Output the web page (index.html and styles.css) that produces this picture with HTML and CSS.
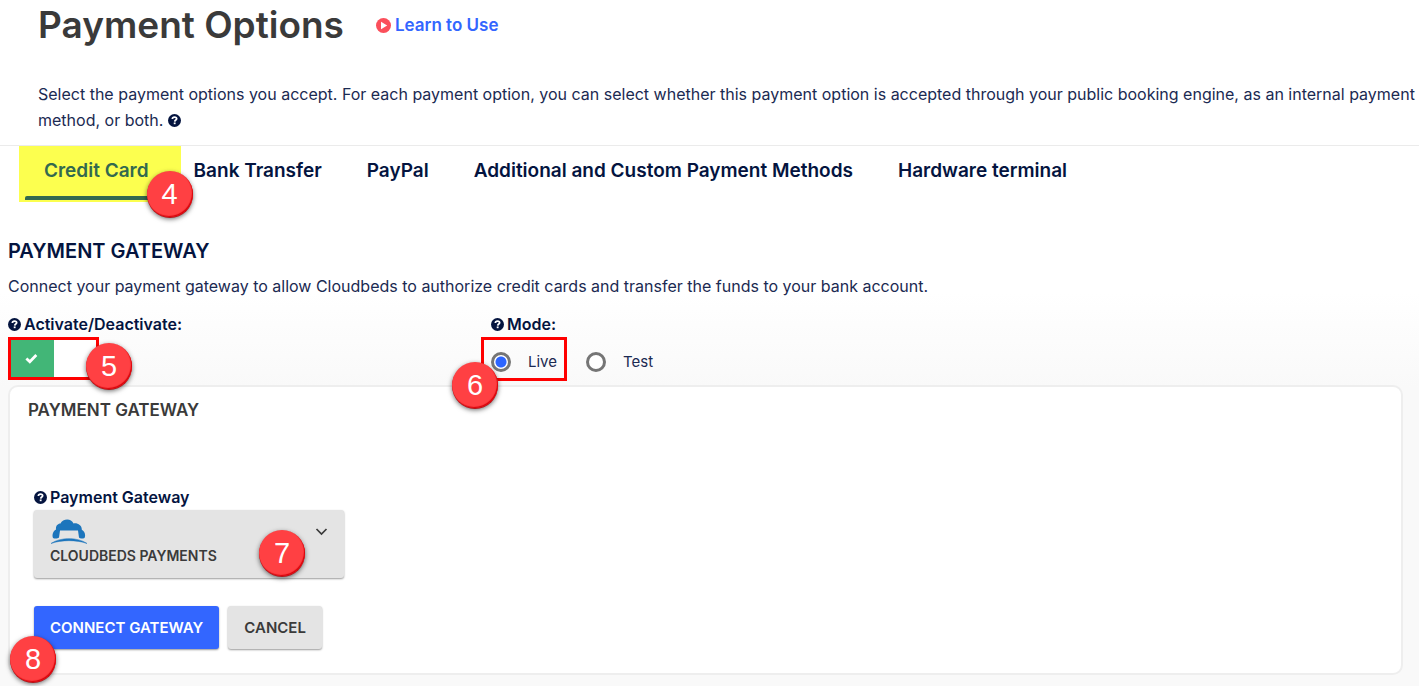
FILE: index.html
```html
<!DOCTYPE html>
<html lang="en">
<head>
<meta charset="utf-8">
<meta name="viewport" content="width=device-width, initial-scale=1">
<title>Payment Options</title>
<link rel="stylesheet" href="styles.css">
</head>
<body>
<svg class="sprite" aria-hidden="true">
  <symbol id="help" viewBox="0 0 12 12">
    <circle cx="6" cy="6" r="6" fill="currentColor"/>
    <path d="M4 4.6C4.1 3.3 5 2.8 6 2.8s2 .6 2 1.6C8 5.600 6.300 5.600 6.200 7" fill="none" stroke="#fff" stroke-width="1.600"/>
    <rect x="5.300" y="7.800" width="1.700" height="1.600" fill="#fff"/>
  </symbol>
</svg>
<header class="page-header">
  <div class="title-row">
    <h1 class="title">Payment Options</h1>
    <a class="learn" href="#learn">
      <svg class="learn-icon" viewBox="0 0 15 15" aria-hidden="true"><circle cx="7.500" cy="7.500" r="7.500" fill="#fb4f5b"/><path d="M5 3.800v7.400l6.200-3.700z" fill="#fff"/></svg>
      Learn to Use
    </a>
  </div>
  <p class="intro">Select the payment options you accept. For each payment option, you can select whether this payment option is accepted through your public booking engine, as an internal payment method, or both. <svg class="help" aria-hidden="true"><use href="#help"/></svg></p>
</header>
<nav class="tabs">
  <a class="tab tab-active" href="#card">Credit Card<span class="badge badge-tab">4</span></a>
  <a class="tab" href="#bank">Bank Transfer</a>
  <a class="tab" href="#paypal">PayPal</a>
  <a class="tab" href="#custom">Additional and Custom Payment Methods</a>
  <a class="tab" href="#hardware">Hardware terminal</a>
</nav>
<main class="content">
  <h2 class="section-title">PAYMENT GATEWAY</h2>
  <p class="section-text">Connect your payment gateway to allow Cloudbeds to authorize credit cards and transfer the funds to your bank account.</p>
  <div class="settings">
    <div class="setting">
      <label class="label" for="active"><svg class="help" aria-hidden="true"><use href="#help"/></svg>Activate/Deactivate:</label>
      <div class="callout callout-toggle">
        <span class="toggle">
          <input class="toggle-input" id="active" type="checkbox" checked>
          <svg class="check" viewBox="0 0 14 11" aria-hidden="true"><path d="M1.500 5.500l3.700 3.500 7-7.200" fill="none" stroke="#fff" stroke-width="3"/></svg>
        </span>
        <span class="badge badge-toggle">5</span>
      </div>
    </div>
    <fieldset class="setting">
      <legend class="label label-mode"><svg class="help" aria-hidden="true"><use href="#help"/></svg>Mode:</legend>
      <div class="mode-row">
        <div class="callout callout-live">
          <label class="mode"><input class="radio" type="radio" name="mode" checked>Live</label>
          <span class="badge badge-live">6</span>
        </div>
        <label class="mode"><input class="radio" type="radio" name="mode">Test</label>
      </div>
    </fieldset>
  </div>
  <section class="card">
    <h3 class="card-title">PAYMENT GATEWAY</h3>
    <div class="form">
      <label class="label" for="gateway"><svg class="help" aria-hidden="true"><use href="#help"/></svg>Payment Gateway</label>
      <div class="gateway">
        <select class="gateway-select" id="gateway"><option>CLOUDBEDS PAYMENTS</option></select>
        <svg class="logo" viewBox="0 0 36 25" aria-hidden="true">
          <path d="M5 10.500C4.500 6 7.500 4.600 9.500 4.500C11.500-.2 20-1.500 22.500 4.500c3.500-1 8.500 1.500 8.300 6.300C33.500 12 35 16 33.500 19c-2.200 1-4.500.6-5.500-.5L27 11.500H9L8 18.500C6.500 20 3.500 19.800 2 19 .7 16 2 12 5 10.500z" fill="#1c75bc"/>
          <path d="M0 24.500C9 18 27 18 36 24.500 26 20.700 10 20.700 0 24.500z" fill="#1c75bc" stroke="#1c75bc" stroke-width=".5"/>
        </svg>
        <svg class="chevron" viewBox="0 0 12 8" aria-hidden="true"><path d="M1 1l5 5 5-5" fill="none" stroke="#3a3a3a" stroke-width="1.700"/></svg>
        <span class="badge badge-gateway">7</span>
      </div>
      <div class="actions">
        <button class="button primary" type="button">CONNECT GATEWAY<span class="badge badge-connect">8</span></button>
        <button class="button" type="button">CANCEL</button>
      </div>
    </div>
  </section>
</main>
</body>
</html>
```
FILE: styles.css
```css
* { box-sizing: border-box; }
body {
  margin: 0;
  background: #fff;
  color: #04143f;
  font: 16px/26px Inter, "Open Sans", sans-serif;
}
h1, h2, h3, p { margin: 0; }
a { text-decoration: none; }
.sprite { position: absolute; width: 0; height: 0; }
.help { width: 13px; height: 13px; flex: none; vertical-align: -1px; color: #04143f; }

.page-header { padding: 0 0 12px 38px; border-bottom: 1px solid #ebebeb; }
.title-row { display: flex; align-items: center; gap: 32px; height: 50px; margin-bottom: 31px; }
.title { color: #3a3a3a; font-size: 37px; font-weight: 600; line-height: 48px; }
.learn { display: flex; align-items: center; gap: 4px; color: #3366ff; font-size: 17px; font-weight: 600; }
.learn-icon { width: 15px; height: 15px; }
.intro { color: #1b2a52; }

.tabs { display: flex; padding-left: 19px; }
.tab { padding: 0 22px 0 23px; color: #04143f; font-size: 19px; font-weight: 600; line-height: 50px; }
.tab-active { position: relative; height: 56px; margin-right: -10px; padding: 0 32px 0 25px; background: #fcff4f; color: #33694f; }
.tab-active::after {
  content: "";
  position: absolute;
  bottom: 2px;
  left: 6px;
  right: 16px;
  height: 4px;
  border-radius: 2px 2px 0 0;
  background: #33694f;
}

.badge {
  position: absolute;
  z-index: 2;
  width: 46px;
  height: 46px;
  border-radius: 50%;
  background: #ff4043;
  box-shadow: inset -1px -1px 1px #d80008, 0 1px 0 #b51318, 0 2px 5px rgba(0, 0, 0, .6);
  color: #fff;
  font: 29px/46px "Liberation Sans", Arial, sans-serif;
  text-align: center;
}
.badge-tab { right: -12px; bottom: -15px; }
.badge-toggle { top: 3px; right: -36px; }
.badge-live { top: 22px; left: -32px; }
.badge-gateway { top: 20px; right: 39px; }
.badge-connect { left: -24px; bottom: -33px; }

.content { padding: 36px 16px 11px 8px; background: linear-gradient(#fff 0, #fff 90px, #f9f9f9 185px, #f9f9f9 100%); }
.section-title { font-size: 20px; font-weight: 600; line-height: 26px; }
.section-text { margin: 9px 0 12px; color: #1b2a52; }
.settings { display: grid; grid-template-columns: 473px 1fr; }
.setting { min-width: 0; margin: 0; padding: 0; border: 0; }
.label { display: flex; align-items: center; gap: 3px; padding: 0; font-weight: 600; }
.label-mode { padding-left: 10px; }
.callout { position: relative; border: 3px solid #f00; }
.callout-toggle { width: 91px; height: 43px; }
.toggle { display: grid; width: 100%; height: 100%; background: #fff; }
.toggle-input { grid-area: 1 / 1; width: 43px; height: 100%; margin: 0; appearance: none; background: #42b677; }
.check { grid-area: 1 / 1; z-index: 1; width: 13px; height: 11px; align-self: center; margin-left: 14px; pointer-events: none; }
.mode-row { display: flex; align-items: center; gap: 19px; }
.callout-live { padding: 0 7px; height: 44px; }
.mode { display: flex; align-items: center; gap: 17px; height: 38px; padding-top: 5px; color: #1b2a52; font-size: 15px; }
.radio {
  width: 20px;
  height: 20px;
  margin: 0;
  border: 3px solid #757575;
  border-radius: 50%;
  appearance: none;
  background: #fff;
}
.radio:checked { background: radial-gradient(circle, #2d65ff 5px, #fff 6px); }

.card { margin-top: 4px; padding: 10px 18px 24px; border: 2px solid #eee; border-radius: 10px; background: #fff; }
.card-title { color: #3a3a3a; font-size: 17px; font-weight: 600; line-height: 26px; }
.form { padding: 61px 6px 0; }
.gateway { position: relative; width: 310px; max-width: 100%; }
.gateway-select {
  display: block;
  width: 100%;
  height: 68px;
  padding: 24px 16px 0;
  border: 0;
  border-radius: 3px;
  appearance: none;
  background: #e4e4e4;
  box-shadow: 0 1px 2px rgba(0, 0, 0, .4);
  color: #3a3a3a;
  font: 600 14px/26px Inter, "Open Sans", sans-serif;
}
.logo { position: absolute; top: 9px; left: 17px; width: 36px; height: 25px; pointer-events: none; }
.chevron { position: absolute; top: 18px; right: 16px; width: 13px; height: 8px; pointer-events: none; }
.actions { display: flex; gap: 9px; margin-top: 28px; }
.button {
  position: relative;
  height: 43px;
  padding: 0 16px;
  border: 0;
  border-radius: 3px;
  background: #e4e4e4;
  box-shadow: 0 1px 2px rgba(0, 0, 0, .4);
  color: #3a3a3a;
  font: 600 15px/26px Inter, "Open Sans", sans-serif;
}
.primary { background: #3366ff; color: #fff; }
```
